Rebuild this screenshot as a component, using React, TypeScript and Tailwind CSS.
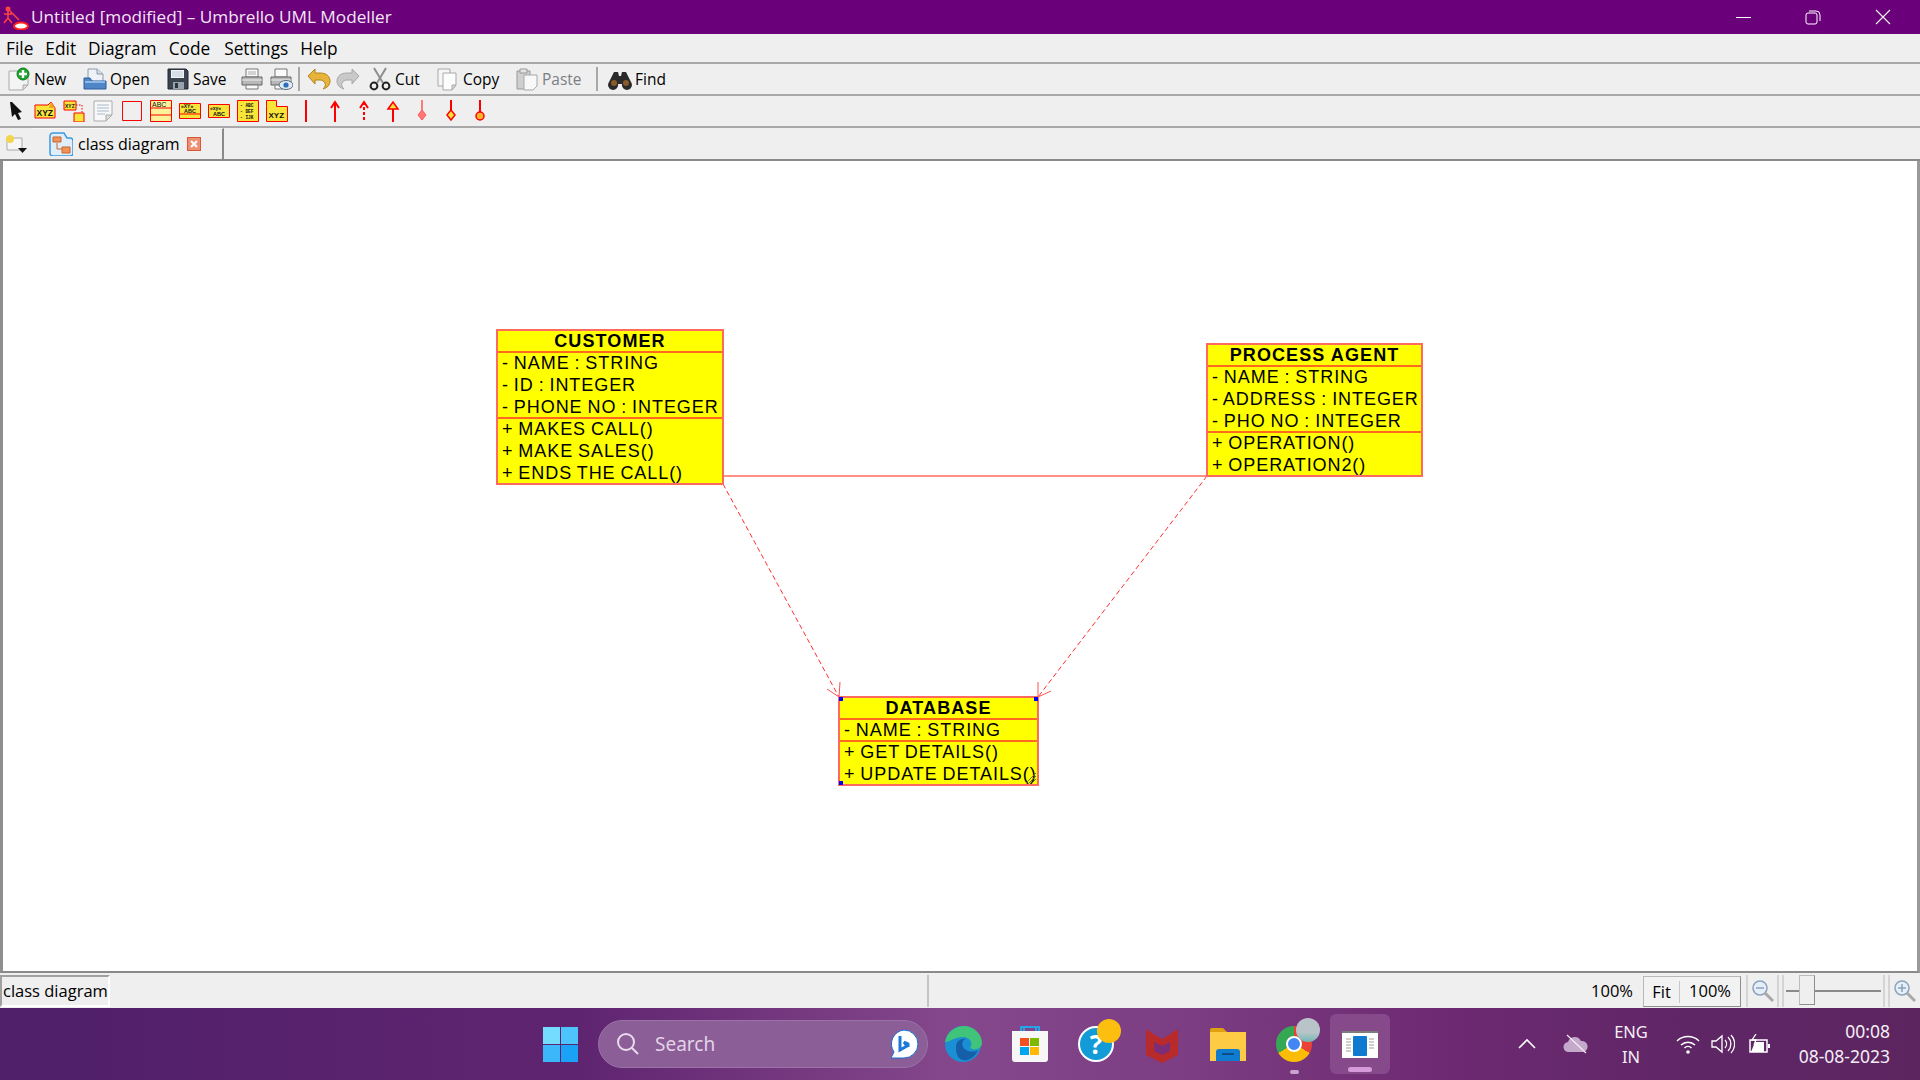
import React from "react";

const ui = "font-['Open_Sans','Noto_Sans',sans-serif]";

// ---- small drawn icons ----
const Ico = ({ w = 24, h = 24, vb, children }: { w?: number; h?: number; vb?: string; children: React.ReactNode }) => (
  <svg width={w} height={h} viewBox={vb ?? `0 0 ${w} ${h}`} className="block shrink-0">
    {children}
  </svg>
);

const NewIcon = () => (
  <Ico>
    <path d="M2 4h12l7 5v9l-5 5H2z" fill="#f4f4f4" stroke="#aaa" />
    <path d="M16 23v-5h5z" fill="#ddd" stroke="#aaa" />
    <circle cx="16" cy="7" r="6" fill="#1ea32c" stroke="#0d7d1a" />
    <path d="M16 3v8M12 7h8" stroke="#fff" strokeWidth="2.4" />
  </Ico>
);
const OpenIcon = () => (
  <Ico>
    <path d="M5 14V2h9l6 5v8z" fill="#eef1f6" stroke="#8d9aab" />
    <path d="M14 2v5h6" fill="#d5dbe3" stroke="#8d9aab" />
    <path d="M1 22V11h6l2 3h14v8z" fill="#4f86c6" stroke="#2a5e9c" />
    <path d="M2 15h20" stroke="#8fb8e6" strokeWidth="2" />
  </Ico>
);
const SaveIcon = () => (
  <Ico>
    <path d="M2 2h18l2 2v18H2z" fill="#3a4450" stroke="#20262e" />
    <path d="M5 3h13v8H5z" fill="#f2f5f8" />
    <path d="M6 5h11M6 7h11M6 9h11" stroke="#bcc6d0" />
    <path d="M7 15h11v7H7z" fill="#98a2ad" />
    <path d="M9 16h3v5H9z" fill="#2c333b" />
  </Ico>
);
const PrintIcon = () => (
  <Ico>
    <path d="M6 2h12v8H6z" fill="#fafafa" stroke="#777" />
    <path d="M8 5h8M8 7h8" stroke="#aaa" />
    <path d="M2 10h20v8H2z" fill="#b8b8b8" stroke="#666" />
    <path d="M2 13h20" stroke="#eee" />
    <path d="M6 18h12v4H6z" fill="#fafafa" stroke="#777" />
  </Ico>
);
const PreviewIcon = () => (
  <Ico>
    <path d="M6 2h12v8H6z" fill="#fafafa" stroke="#777" />
    <path d="M2 10h20v8H2z" fill="#b8b8b8" stroke="#666" />
    <path d="M2 13h20" stroke="#eee" />
    <path d="M6 18h8v4H6z" fill="#fafafa" stroke="#777" />
    <ellipse cx="17" cy="18" rx="7" ry="4.5" fill="#dfe9f3" stroke="#5a6b80" />
    <circle cx="17" cy="18" r="2.6" fill="#2c6fb7" />
  </Ico>
);
const UndoIcon = () => (
  <Ico>
    <path d="M1 9l7-7v4h5c6 0 10 3 10 8 0 4-3 7-7 8 2-2 3-4 2-6-1-2-3-3-5-3H8v4z" fill="#e7b33a" stroke="#b38417" />
  </Ico>
);
const RedoIcon = () => (
  <Ico>
    <path d="M23 9l-7-7v4h-5C5 6 1 9 1 14c0 4 3 7 7 8-2-2-3-4-2-6 1-2 3-3 5-3h5v4z" fill="#c9c9c9" stroke="#a8a8a8" />
  </Ico>
);
const CutIcon = () => (
  <Ico>
    <path d="M6 1l9 15M18 1L9 16" stroke="#8d8d8d" strokeWidth="2" fill="none" />
    <circle cx="6" cy="19" r="3.4" fill="none" stroke="#222" strokeWidth="2" />
    <circle cx="18" cy="19" r="3.4" fill="none" stroke="#222" strokeWidth="2" />
  </Ico>
);
const CopyIcon = () => (
  <Ico>
    <path d="M2 2h12v17H2z" fill="#f6f6f6" stroke="#a8a8a8" />
    <path d="M7 6h13v12l-4 5H7z" fill="#fcfcfc" stroke="#a8a8a8" />
    <path d="M16 23v-5h4z" fill="#ddd" stroke="#a8a8a8" />
  </Ico>
);
const PasteIcon = () => (
  <Ico>
    <path d="M2 4h13v18H2z" fill="#cfcfcf" stroke="#999" />
    <path d="M5 2h7v4H5z" fill="#e2e2e2" stroke="#999" />
    <path d="M9 8h13v11l-4 4H9z" fill="#f8f8f8" stroke="#a8a8a8" />
  </Ico>
);
const FindIcon = () => (
  <Ico>
    <path d="M6 5h4l1 4h2l1-4h4l5 10a5 5 0 1 1-9 2h-4a5 5 0 1 1-9-2z" fill="#2a2a2a" />
    <circle cx="6" cy="16" r="3" fill="#8a5a2a" />
    <circle cx="18" cy="16" r="3" fill="#8a5a2a" />
  </Ico>
);

const NoteBox = ({ children }: { children: React.ReactNode }) => <Ico w={22} h={22}>{children}</Ico>;

const ToolIcons = [
  <NoteBox key="a">
    <path d="M5 2l2 0 10 10-4 1 3 6-3 1-3-6-3 3z" fill="#111" />
  </NoteBox>,
  <NoteBox key="b">
    <path d="M1 5h13l3-3 4 6v10H1z" fill="#f7e53a" stroke="#f00" />
    <path d="M17 2l4 6h-6z" fill="#f5a11f" />
    <text x="2.5" y="16" fontSize="8.5" fontWeight="700" fontFamily="Liberation Sans" fill="#111">XYZ</text>
  </NoteBox>,
  <NoteBox key="c">
    <path d="M1 1h12v9H1z" fill="#f7e53a" stroke="#f00" />
    <path d="M11 13h10v9H11z" fill="#f7e53a" stroke="#f00" />
    <path d="M13 5h6v8" fill="none" stroke="#f00" strokeDasharray="1.5 1.5" />
    <text x="2" y="8" fontSize="5" fontWeight="700" fontFamily="Liberation Sans" fill="#111">XYZ</text>
  </NoteBox>,
  <NoteBox key="d">
    <path d="M2 1h18v14l-6 6H2z" fill="#f8f8f8" stroke="#aaa" />
    <path d="M5 5h12M5 8h12M5 11h12M5 14h8" stroke="#a8b8cc" />
    <path d="M14 21v-6h6z" fill="#ddd" stroke="#aaa" />
  </NoteBox>,
  <NoteBox key="e">
    <path d="M1.500 1.500h19v19h-19z" fill="none" stroke="#f00" />
  </NoteBox>,
  <NoteBox key="f">
    <path d="M.5.5h21v21H.5z" fill="#fbf29a" stroke="#f00" />
    <path d="M0 8h22M0 15h22" stroke="#f00" />
    <text x="2" y="7" fontSize="7" fontFamily="Liberation Sans" fill="#111">ABC</text>
  </NoteBox>,
  <NoteBox key="g">
    <path d="M.5 3.500h21v15H.5z" fill="#f7e53a" stroke="#f00" />
    <path d="M0 14h22" stroke="#f00" />
    <text x="2" y="8" fontSize="5" fontWeight="700" fontFamily="Liberation Sans" fill="#111">«XY»</text>
    <text x="5" y="13" fontSize="5.500" fontWeight="700" fontFamily="Liberation Sans" fill="#111">ABC</text>
  </NoteBox>,
  <NoteBox key="h">
    <path d="M.5 4.500h21v13H.5z" fill="#f7e53a" stroke="#f00" />
    <text x="2" y="10" fontSize="5" fontWeight="700" fontFamily="Liberation Sans" fill="#111">«xy»</text>
    <text x="5" y="16" fontSize="5.500" fontWeight="700" fontFamily="Liberation Sans" fill="#111">ABC</text>
  </NoteBox>,
  <NoteBox key="i">
    <path d="M.5.5h21v21H.5z" fill="#f7e53a" stroke="#f00" />
    <text x="3" y="7" fontSize="4.500" fontWeight="700" fontFamily="Liberation Mono" fill="#111">- ABC</text>
    <text x="3" y="13" fontSize="4.500" fontWeight="700" fontFamily="Liberation Mono" fill="#111">- DEF</text>
    <text x="3" y="19" fontSize="4.500" fontWeight="700" fontFamily="Liberation Mono" fill="#111">- IJK</text>
  </NoteBox>,
  <NoteBox key="j">
    <path d="M.5 6.500V.5h10v6h11v15H.5z" fill="#f7e53a" stroke="#f00" />
    <text x="2.500" y="18" fontSize="8" fontWeight="700" fontFamily="Liberation Sans" fill="#111">XYZ</text>
  </NoteBox>,
  <NoteBox key="k">
    <path d="M11 0v22" stroke="#f00" strokeWidth="2" />
  </NoteBox>,
  <NoteBox key="l">
    <path d="M11 2v20M7 8l4-6 4 6" stroke="#f00" strokeWidth="2" fill="none" />
  </NoteBox>,
  <NoteBox key="m">
    <path d="M11 2v20" stroke="#f00" strokeWidth="2" strokeDasharray="3 2" />
    <path d="M7 8l4-6 4 6" stroke="#f00" strokeWidth="2" fill="none" />
  </NoteBox>,
  <NoteBox key="n">
    <path d="M11 8v14" stroke="#f00" strokeWidth="2" />
    <path d="M6 9l5-7 5 7z" fill="#f7e53a" stroke="#f00" strokeWidth="1.500" />
  </NoteBox>,
  <NoteBox key="o">
    <path d="M11 0v12" stroke="#f55" strokeWidth="1.500" />
    <path d="M11 10l4 5-4 5-4-5z" fill="#f77" stroke="#f55" />
  </NoteBox>,
  <NoteBox key="p">
    <path d="M11 0v12" stroke="#f00" strokeWidth="2" />
    <path d="M11 10l4 5-4 5-4-5z" fill="#f7e53a" stroke="#f00" strokeWidth="1.500" />
  </NoteBox>,
  <NoteBox key="q">
    <path d="M11 0v12" stroke="#f00" strokeWidth="2" />
    <circle cx="11" cy="16" r="4" fill="#f7b52a" stroke="#f00" strokeWidth="1.500" />
  </NoteBox>,
];

// ---- UML class box, placed freely on the diagram canvas ----
type UmlProps = {
  title: string;
  attrs: string[];
  ops: string[];
  pos: string;
  selected?: boolean;
};

const Row = ({ text }: { text: string }) => (
  <div className="h-[22px] leading-[22px] pl-[4px] whitespace-pre text-[18px] tracking-[0.93px] [word-spacing:-1px] text-black">{text}</div>
);

const UmlClass = ({ title, attrs, ops, pos, selected }: UmlProps) => (
  <div className={`absolute ${pos} bg-[#ffff00] border-2 border-[#ff6a5e] font-['Liberation_Sans',sans-serif]`}>
    <div className="h-[22px] leading-[20px] text-center font-bold text-[18px] tracking-[1.1px] text-black border-b-2 border-[#ff6a1e]">
      {title}
    </div>
    <div className="-mt-px">
      {attrs.map((a) => (
        <Row key={a} text={a} />
      ))}
    </div>
    <div className="-mt-px border-t-2 border-[#ff6a1e]">
      <div className="-mt-px -mb-px">
        {ops.map((o) => (
          <Row key={o} text={o} />
        ))}
      </div>
    </div>
    {selected && (
      <>
        <span className="absolute -left-[1px] -top-[1px] w-[4px] h-[4px] bg-[#0000ff]" />
        <span className="absolute -right-[1px] -top-[1px] w-[4px] h-[4px] bg-[#0000ff]" />
        <span className="absolute -left-[1px] -bottom-[1px] w-[4px] h-[4px] bg-[#0000ff]" />
        <svg width="12" height="12" className="absolute right-0 bottom-0">
          <path d="M1 11L11 1M4 11l7-7M7 11l4-4" stroke="#6b6b2a" strokeWidth="1" />
        </svg>
      </>
    )}
  </div>
);

const ToolBtn = ({ w, icon, label, muted }: { w: string; icon: React.ReactNode; label?: string; muted?: boolean }) => (
  <div className={`${w} h-full flex items-center gap-[3px] shrink-0`}>
    {icon}
    {label && <span className={`relative top-px ${muted ? "text-[#7d7d85]" : "text-black"}`}>{label}</span>}
  </div>
);

const Sep = ({ cls }: { cls: string }) => <div className={`${cls} w-[2px] h-[24px] bg-[#a8a8a8] shrink-0`} />;

export default function App() {
  return (
    <div className={`w-[1920px] h-[1080px] overflow-hidden flex flex-col bg-[#efefef] ${ui}`}>
      {/* title bar */}
      <div className="h-[34px] bg-[#6a007a] flex items-center text-white shrink-0">
        <svg width="28" height="26" viewBox="0 0 28 26" className="ml-[2px] shrink-0">
          <circle cx="6" cy="5" r="2.500" fill="#f44" />
          <path d="M6 7v7M2 10h8M6 14l-4 5M6 14l4 5M8 7l9 9" stroke="#f44" strokeWidth="1.500" fill="none" />
          <ellipse cx="19" cy="22" rx="7" ry="3.500" fill="#fff" stroke="#f22" strokeWidth="2" />
        </svg>
        <span className="ml-[1px] text-[17.2px] text-[#f3e6f6]">Untitled [modified] – Umbrello UML Modeller</span>
        <div className="ml-auto flex items-center h-full">
          <svg width="16" height="16" className="mr-[54px]"><path d="M1 8.500h15" stroke="#fff" /></svg>
          <svg width="16" height="16" className="mr-[54px]">
            <rect x="1" y="4" width="11" height="11" rx="2" fill="none" stroke="#fff" />
            <path d="M4 2h7a4 4 0 0 1 4 4v6" fill="none" stroke="#fff" />
          </svg>
          <svg width="16" height="16" className="mr-[29px]"><path d="M1 1l14 14M15 1L1 15" stroke="#eee" strokeWidth="1.200" /></svg>
        </div>
      </div>

      {/* menu bar */}
      <div className="h-[30px] flex items-center pl-[6px] gap-[12px] text-[17.3px] text-black border-b-2 border-b-[#a9a9a9] shrink-0">
        {["File", "Edit", "Diagram", "Code", "Settings", "Help"].map((m) => (
          <span key={m} className={m === "Settings" ? "relative top-px ml-[2px]" : "relative top-px"}>{m}</span>
        ))}
      </div>

      {/* main toolbar */}
      <div className="h-[32px] flex items-center pl-[7px] text-[15.5px] border-b-2 border-b-[#a9a9a9] shrink-0">
        <ToolBtn w="w-[76px]" icon={<NewIcon />} label="New" />
        <ToolBtn w="w-[83px]" icon={<OpenIcon />} label="Open" />
        <ToolBtn w="w-[74px]" icon={<SaveIcon />} label="Save" />
        <ToolBtn w="w-[29px]" icon={<PrintIcon />} />
        <ToolBtn w="w-[29px]" icon={<PreviewIcon />} />
        <Sep cls="mr-[7px]" />
        <ToolBtn w="w-[29px]" icon={<UndoIcon />} />
        <ToolBtn w="w-[32px]" icon={<RedoIcon />} />
        <ToolBtn w="w-[68px]" icon={<CutIcon />} label="Cut" />
        <ToolBtn w="w-[79px]" icon={<CopyIcon />} label="Copy" />
        <ToolBtn w="w-[81px]" icon={<PasteIcon />} label="Paste" muted />
        <Sep cls="mr-[10px]" />
        <ToolBtn w="w-[70px]" icon={<FindIcon />} label="Find" />
      </div>

      {/* widget toolbar */}
      <div className="h-[32px] flex items-center pl-[5px] gap-[7px] border-b-2 border-b-[#a9a9a9] shrink-0">
        {ToolIcons}
      </div>

      {/* tab strip */}
      <div className="h-[33px] flex items-end border-b-2 border-b-[#8a8a8a] shrink-0">
        <div className="w-[31px] h-full flex items-center justify-center shrink-0">
          <svg width="22" height="20">
            <path d="M2 4h15v12H2z" fill="#f6f6f6" stroke="#aaa" />
            <circle cx="5" cy="5" r="4" fill="#f3d64e" />
            <path d="M13 14h9l-4.500 5z" fill="#111" />
          </svg>
        </div>
        <div className="w-[193px] h-full flex items-center pl-[18px] border-r-2 border-r-[#8a8a8a] border-t border-t-[#f8f8f8] shrink-0">
          <svg width="24" height="24" className="shrink-0">
            <path d="M1 4a3 3 0 0 1 3-3h11l3 5h3a3 3 0 0 1 3 3v12a3 3 0 0 1-3 3H4a3 3 0 0 1-3-3z" fill="#dfeefa" stroke="#3f9be0" strokeWidth="1.500" />
            <path d="M4 5h8v5H4z" fill="#f0935a" stroke="#c9652a" />
            <path d="M13 15h8v6h-8z" fill="#f0935a" stroke="#c9652a" />
            <path d="M8 11v6h5" fill="none" stroke="#c9652a" />
          </svg>
          <span className="ml-[5px] text-[16px] text-black">class diagram</span>
          <span className="ml-[7px] w-[14px] h-[14px] bg-[#ef8f72] border border-[#d9573a] flex items-center justify-center shrink-0">
            <svg width="8" height="8"><path d="M1 1l6 6M7 1L1 7" stroke="#fff" strokeWidth="2" /></svg>
          </span>
        </div>
      </div>

      {/* diagram canvas */}
      <div className="relative flex-1 bg-white border-l-[3px] border-l-[#8f8f8f] border-r-[3px] border-r-[#9a9a9a] border-b-[2px] border-b-[#8a8a8a]">
        <svg width="1920" height="820" className="absolute -left-[3px] top-0" viewBox="0 161 1920 820">
          <path d="M723 476H1207" stroke="#ff6a5e" strokeWidth="1.500" />
          <path d="M723 484L839 697" stroke="#ff3030" strokeDasharray="5 3" fill="none" />
          <path d="M1207 476L1038 697" stroke="#ff3030" strokeDasharray="5 3" fill="none" />
          <path d="M840 682l-1 15-12-8" stroke="#ff5050" fill="none" />
          <path d="M1038 682v15l13-6" stroke="#ff5050" fill="none" />
        </svg>
        <UmlClass
          pos="left-[493px] top-[168px] w-[228px]"
          title="CUSTOMER"
          attrs={["- NAME : STRING", "- ID : INTEGER", "- PHONE NO : INTEGER"]}
          ops={["+ MAKES CALL()", "+ MAKE SALES()", "+ ENDS THE CALL()"]}
        />
        <UmlClass
          pos="left-[1203px] top-[182px] w-[217px]"
          title="PROCESS AGENT"
          attrs={["- NAME : STRING", "- ADDRESS : INTEGER", "- PHO NO : INTEGER"]}
          ops={["+ OPERATION()", "+ OPERATION2()"]}
        />
        <UmlClass
          pos="left-[835px] top-[535px] w-[201px]"
          title="DATABASE"
          attrs={["- NAME : STRING"]}
          ops={["+ GET DETAILS()", "+ UPDATE DETAILS()"]}
          selected
        />
      </div>

      {/* status bar */}
      <div className="h-[35px] flex items-end pb-[1px] text-[16.5px] text-black shrink-0">
        <div className="w-[110px] h-[32px] flex items-center pl-[1px] whitespace-nowrap border-t-2 border-l-2 border-t-[#a0a0a0] border-l-[#a0a0a0] border-b-2 border-r-2 border-b-white border-r-white shrink-0">
          class diagram
        </div>
        <div className="ml-[817px] w-[2px] h-[32px] bg-[#c4c4c4] shrink-0" />
        <span className="ml-auto h-[32px] leading-[32px]">100%</span>
        <div className="ml-[10px] w-[98px] h-[31px] flex items-center bg-[#f2f2f2] border border-[#b8b8b8] border-b-[#8e8e8e] border-r-[#8e8e8e] shrink-0">
          <span className="w-[36px] text-center border-r border-r-[#c8c8c8] leading-[22px]">Fit</span>
          <span className="flex-1 text-center">100%</span>
        </div>
        <div className="ml-[5px] w-[33px] h-[32px] flex items-center justify-center border-x-2 border-x-[#d4d4d4] shrink-0">
          <svg width="24" height="24">
            <circle cx="9" cy="9" r="7" fill="#e6eef7" stroke="#8aa2bb" strokeWidth="1.500" />
            <path d="M5 9h8" stroke="#8aa2bb" strokeWidth="1.500" />
            <path d="M14 14l8 8" stroke="#a9a9a9" strokeWidth="3" />
          </svg>
        </div>
        <div className="relative ml-[3px] w-[103px] h-[32px] flex items-center border-x-2 border-x-[#d4d4d4] shrink-0">
          <div className="w-full h-[2px] mx-[2px] bg-[#8a8a8a]" />
          <div className="absolute left-[15px] top-0 w-[16px] h-[30px] bg-[#efefef] border border-[#bcbcbc] border-r-[#8e8e8e] border-b-[#8e8e8e]" />
        </div>
        <div className="ml-[3px] w-[32px] h-[32px] flex items-center justify-center border-l-2 border-l-[#d4d4d4] shrink-0">
          <svg width="24" height="24">
            <circle cx="9" cy="9" r="7" fill="#e6eef7" stroke="#8aa2bb" strokeWidth="1.500" />
            <path d="M5 9h8M9 5v8" stroke="#8aa2bb" strokeWidth="1.500" />
            <path d="M14 14l8 8" stroke="#a9a9a9" strokeWidth="3" />
          </svg>
        </div>
      </div>

      {/* windows taskbar */}
      <div className="h-[72px] flex items-center shrink-0 text-white bg-[linear-gradient(90deg,#50206a_0%,#5f2470_30%,#85488c_50%,#7c3d82_62%,#6e2a72_75%,#5f2666_88%,#5c2560_100%)] font-['Noto_Sans',sans-serif]">
        <div className="ml-[543px] w-[35px] h-[35px] grid grid-cols-2 grid-rows-2 gap-[1px] shrink-0">
          <span className="bg-[#73dcff]" />
          <span className="bg-[#4dc4fb]" />
          <span className="bg-[#3cb8fa]" />
          <span className="bg-[#1aa2f7]" />
        </div>
        <div className="ml-[20px] w-[330px] h-[48px] rounded-full flex items-center bg-[#8b5e98] border border-[#9a72a6] shrink-0">
          <svg width="24" height="24" className="ml-[17px] shrink-0">
            <circle cx="10" cy="10" r="8" fill="none" stroke="#e8dcec" strokeWidth="2" />
            <path d="M16 16l6 6" stroke="#e8dcec" strokeWidth="2" />
          </svg>
          <span className="ml-[15px] text-[19px] text-[#e2d3e6]">Search</span>
          <svg width="30" height="30" className="ml-auto mr-[8px] shrink-0">
            <path d="M15 1a14 14 0 0 1 0 28H2l3-6A14 14 0 0 1 15 1z" fill="#fff" stroke="#1b6ccf" />
            <path d="M11 7v14l7-4-3-4 4 2v3" fill="none" stroke="#1e78d8" strokeWidth="3" />
          </svg>
        </div>
        <svg width="38" height="38" className="ml-[16px] shrink-0">
          <circle cx="19" cy="19" r="18" fill="#1b8fd3" />
          <path d="M1 17C3 6 12 1 20 1c10 0 18 8 18 17 0 6-8 8-12 5 4-6-1-11-7-11-8 0-14 5-18 5z" fill="#3fc47a" />
          <path d="M12 22c0-6 5-9 10-8-5 1-5 8 0 11 4 2 9 2 12 0-3 7-9 11-15 10-6-1-7-8-7-13z" fill="#155fa8" />
        </svg>
        <svg width="38" height="38" className="ml-[29px] shrink-0">
          <path d="M10 6V2h18v4M13 6V3M25 6V3" stroke="#27a4e6" strokeWidth="2" fill="none" />
          <path d="M1 6h36v28a3 3 0 0 1-3 3H4a3 3 0 0 1-3-3z" fill="#f7f7f7" />
          <rect x="9" y="13" width="9" height="8" fill="#f25022" />
          <rect x="19" y="13" width="9" height="8" fill="#7fba00" />
          <rect x="9" y="22" width="9" height="8" fill="#00a4ef" />
          <rect x="19" y="22" width="9" height="8" fill="#ffb900" />
        </svg>
        <div className="relative ml-[29px] w-[36px] h-[36px] rounded-full bg-[#129bd6] border-2 border-white flex items-center justify-center text-[26px] font-bold shrink-0">
          ?
          <span className="absolute -right-[9px] -top-[9px] w-[24px] h-[24px] rounded-full bg-[#fdbf0f]" />
        </div>
        <svg width="34" height="38" className="ml-[31px] shrink-0">
          <path d="M1 4l9 6 7 4 7-4 9-6v26l-16 8-16-8z" fill="#b92b2b" />
          <path d="M9 17l8 4 8-4v9l-8 4-8-4z" fill="#7a2e78" />
        </svg>
        <svg width="36" height="34" className="ml-[31px] shrink-0">
          <path d="M0 3a2 2 0 0 1 2-2h11l4 4h17a2 2 0 0 1 2 2v4H0z" fill="#e0a10f" />
          <path d="M0 5h36v29H0z" fill="#fecb44" />
          <path d="M6 25a3 3 0 0 1 3-3h18a3 3 0 0 1 3 3v9H6z" fill="#0f7ccf" />
          <path d="M12 27h12" stroke="#0a4f88" strokeWidth="2" />
        </svg>
        <div className="relative ml-[30px] w-[36px] h-[36px] rounded-full shrink-0 bg-[conic-gradient(#ea4335_0deg_120deg,#fbbc05_120deg_240deg,#34a853_240deg_360deg)] flex items-center justify-center">
          <span className="w-[16px] h-[16px] rounded-full bg-[#4285f4] border-2 border-white" />
          <span className="absolute -right-[8px] -top-[8px] w-[24px] h-[24px] rounded-full bg-[linear-gradient(180deg,#b9c4c8_60%,#6fb8b4_100%)]" />
          <span className="absolute left-[14px] -bottom-[12px] w-[9px] h-[4px] rounded-full bg-[#c9a4cf]" />
        </div>
        <div className="relative ml-[18px] w-[60px] h-[60px] rounded-[6px] bg-[#86498a] flex items-center justify-center shrink-0">
          <svg width="36" height="27">
            <rect width="36" height="27" fill="#fff" />
            <rect width="36" height="2" fill="#7c7c7c" />
            <rect x="11" y="5" width="14" height="20" rx="1" fill="#0f7ad0" />
            <path d="M4 8h5M4 11h5M4 14h5M4 17h5M4 20h5M27 8h5M27 11h5M27 14h5M27 17h5" stroke="#cfcfcf" strokeWidth="2" />
          </svg>
          <span className="absolute left-[18px] bottom-[2px] w-[24px] h-[5px] rounded-full bg-[#d69ad9]" />
        </div>

        <svg width="20" height="12" className="ml-[127px] shrink-0">
          <path d="M2 10l8-8 8 8" fill="none" stroke="#fff" strokeWidth="1.600" />
        </svg>
        <svg width="26" height="20" className="ml-[26px] shrink-0">
          <path d="M6 18a5 5 0 0 1-1-10 7 7 0 0 1 13-1 5.500 5.500 0 0 1 2 11z" fill="#c4a9ca" />
          <path d="M4 1l19 18" stroke="#f4edf5" strokeWidth="1.200" />
        </svg>
        <div className="ml-[22px] w-[40px] text-center text-[16.5px] leading-[25px] shrink-0 text-[#f5eef6]">
          <div>ENG</div>
          <div>IN</div>
        </div>
        <svg width="24" height="20" className="ml-[25px] shrink-0">
          <path d="M1 7a16 16 0 0 1 22 0M5 11a10 10 0 0 1 14 0M8.500 14a5 5 0 0 1 7 0" fill="none" stroke="#fff" strokeWidth="1.500" />
          <circle cx="12" cy="18" r="1.800" fill="#fff" />
        </svg>
        <svg width="24" height="22" className="ml-[11px] shrink-0">
          <path d="M1 8h4l6-5v16l-6-5H1z" fill="none" stroke="#fff" strokeWidth="1.300" />
          <path d="M14 7a6 6 0 0 1 0 8M17 4a10 10 0 0 1 0 14M20 2a13 13 0 0 1 0 18" fill="none" stroke="#fff" strokeWidth="1.300" />
        </svg>
        <svg width="24" height="20" className="ml-[12px] shrink-0">
          <path d="M3 6h17v12H3z" fill="none" stroke="#fff" strokeWidth="1.500" />
          <path d="M4 18l4-10h9v10z" fill="#fff" />
          <path d="M21 10h2v4h-2z" fill="#fff" />
          <path d="M9 0L5 6h4l-2 5" fill="none" stroke="#fff" strokeWidth="1.300" />
        </svg>
        <div className="ml-auto mr-[30px] text-right text-[17.5px] leading-[25px] shrink-0 text-[#f5eef6]">
          <div>00:08</div>
          <div>08-08-2023</div>
        </div>
      </div>
    </div>
  );
}
